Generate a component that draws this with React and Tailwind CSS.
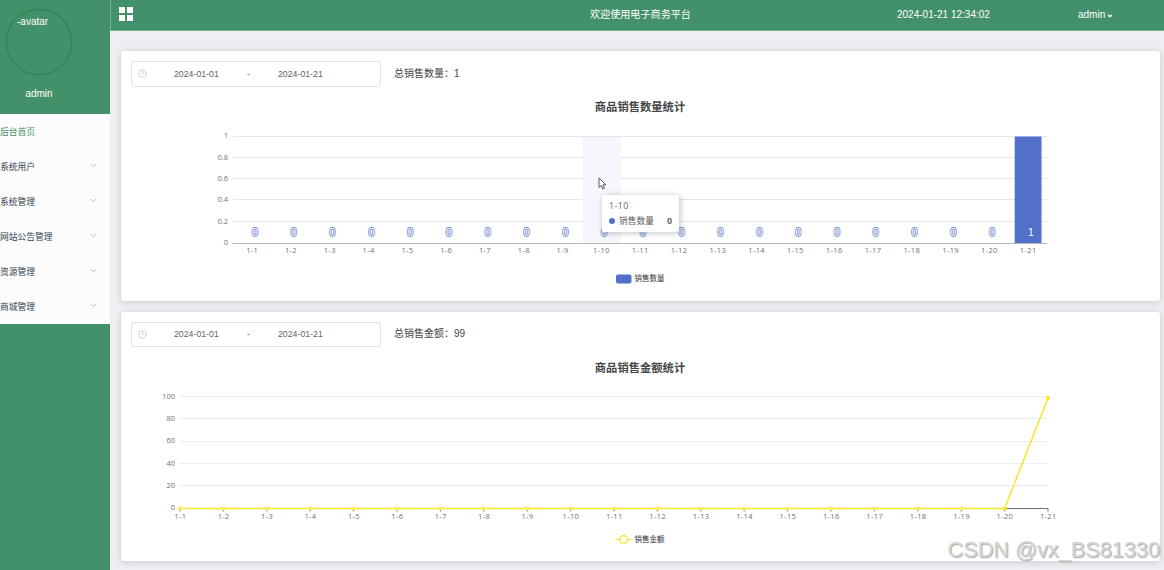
import { ChevronDown, Clock3 } from 'lucide-react';

const menuItems = [
  { label: '后台首页', active: true },
  { label: '系统用户' },
  { label: '系统管理' },
  { label: '网站公告管理' },
  { label: '资源管理' },
  { label: '商城管理' },
];

const days = Array.from({ length: 21 }, (_, i) => `1-${i + 1}`);
const counts = days.map((_, i) => (i === 20 ? 1 : 0));
const amounts = days.map((_, i) => (i === 20 ? 99 : 0));

const axisText = "font-['Open_Sans','Noto_Sans_CJK_SC',sans-serif] text-[7.5px] fill-[#6e7079]";
const legendText = "font-['Noto_Sans_CJK_SC',sans-serif] text-[7.5px] fill-[#333]";
const titleText = "font-['Noto_Sans_CJK_SC',sans-serif] text-[11.3px] font-bold fill-[#464646]";

function Sidebar() {
  return (
    <aside className="w-[110px] shrink-0 bg-[#43916a] text-white">
      <div className="h-[114px] pl-[6px] pt-[9px]">
        <div className="h-[66px] w-[66px] rounded-full border border-[#357d58] pl-[10px] pt-[5px] text-[10px] leading-[14px] shadow-[0_0_2px_#357d58]">
          -avatar
        </div>
        <p className="w-[66px] pt-[12px] text-center text-[10px] leading-[14px]">admin</p>
      </div>
      <ul className="bg-[#fcfcfc]">
        {menuItems.map((item) => (
          <li
            key={item.label}
            className={`flex h-[35px] items-center justify-between pr-[12px] text-[8.75px] leading-none ${
              item.active ? 'text-[#43916a]' : 'text-[#303f50]'
            }`}
          >
            <span className="pt-[2px]">{item.label}</span>
            {!item.active && <ChevronDown className="mb-[2px] h-[9px] w-[9px] text-[#a0a4ab]" strokeWidth={2} />}
          </li>
        ))}
      </ul>
    </aside>
  );
}

function Header() {
  return (
    <header className="flex h-[31px] items-center border-b border-l border-[#79b295] bg-[#43916a] text-[10px] leading-none text-white">
      <div className="ml-[8px] mb-[3px] grid grid-cols-2 gap-[2px]">
        <i className="h-[6px] w-[6px] bg-white" />
        <i className="h-[6px] w-[6px] bg-white" />
        <i className="h-[6px] w-[6px] bg-white" />
        <i className="h-[6px] w-[6px] bg-white" />
      </div>
      <span className="ml-[457px] w-[101px] whitespace-nowrap text-[10.1px]">欢迎使用电子商务平台</span>
      <span className="ml-[206px] mb-[1px] w-[94px] whitespace-nowrap">2024-01-21 12:34:02</span>
      <span className="ml-[87px] mb-[1px] flex items-center gap-[2px]">
        admin
        <ChevronDown className="mt-[2px] h-[6px] w-[6px]" strokeWidth={6} />
      </span>
    </header>
  );
}

function DateRange() {
  return (
    <div className="flex h-[25.5px] w-[250px] items-center rounded-[3px] border border-[#dfe2e8] text-[8.75px] leading-none text-[#606266]">
      <Clock3 className="ml-[6px] h-[9px] w-[9px] text-[#c0c4cc]" strokeWidth={2} />
      <span className="ml-[27px] w-[45px] whitespace-nowrap pt-[1px]">2024-01-01</span>
      <span className="w-[59px] pt-[1px] text-center">-</span>
      <span className="whitespace-nowrap pt-[1px]">2024-01-21</span>
    </div>
  );
}

function Card({ label, total, children }) {
  return (
    <section className="relative h-[249.5px] rounded-[3px] bg-white p-[10px] shadow-[0_1px_7px_rgba(0,0,0,0.16)]">
      <div className="flex items-center gap-[13px]">
        <DateRange />
        <p className="text-[10px] leading-none text-[#444]">
          {label}：{total}
        </p>
      </div>
      {children}
    </section>
  );
}

function CountChart() {
  const left = 101.5;
  const step = 38.8;
  const bottom = 152;
  return (
    <svg className="mt-[4.5px] block h-[200px] w-[1019px]" viewBox="0 0 1019 200">
      <text x="509" y="20" textAnchor="middle" className={titleText}>商品销售数量统计</text>
      {['0.2', '0.4', '0.6', '0.8', '1'].map((tick, i) => (
        <g key={tick}>
          <path d={`M${left} ${Math.round(bottom - (i + 1) * 21.3) - 0.5}H916.5`} stroke="#e4e7f0" />
          <text x="97" y={bottom - (i + 1) * 21.3 + 1.8} textAnchor="end" className={axisText}>{tick}</text>
        </g>
      ))}
      <text x="97" y={bottom + 1.5} textAnchor="end" className={axisText}>0</text>
      <rect x={left + 9 * step + 0.5} y="46" width="38.8" height="106" fill="#f5f7fc" />
      {counts.map((count, i) => {
        const center = left + step * (i + 0.5);
        return (
          <g key={days[i]}>
            {count > 0 && (
              <rect x={center - 13.2} y={bottom - count * 106.5} width="26.8" height={count * 106.5} fill="#5070ca" />
            )}
            <text
              x={center + 3}
              y="145.3"
              textAnchor="middle"
              className="font-['Liberation_Sans',sans-serif] text-[10.5px]"
              fill="#fff"
              stroke="#7b91d4"
              strokeWidth={count > 0 ? 0 : 1.8}
              paintOrder="stroke"
            >
              {count}
            </text>
            <text x={center + 0.3} y="162" textAnchor="middle" letterSpacing="0.35" className={axisText}>{days[i]}</text>
          </g>
        );
      })}
      <path d={`M${left} ${bottom + 0.5}H916.5`} stroke="#b4b6bb" />
      <rect x="485" y="183.5" width="15.5" height="9" rx="2" fill="#5070ca" />
      <text x="503.5" y="190" className={legendText}>销售数量</text>
    </svg>
  );
}

function AmountChart() {
  const left = 49;
  const step = 43.4;
  const bottom = 156.5;
  const y = (value) => bottom - value * 1.115;
  const points = amounts.map((value, i) => [left + i * step, y(value)]);
  return (
    <svg className="mt-[5px] block h-[200px] w-[1019px]" viewBox="0 0 1019 200">
      <text x="509" y="19.5" textAnchor="middle" className={titleText}>商品销售金额统计</text>
      {[0, 20, 40, 60, 80, 100].map((tick) => (
        <g key={tick}>
          {tick > 0 && <path d={`M${left} ${Math.round(y(tick)) - 0.5}H917`} stroke="#ebedf4" />}
          <text x="44" y={y(tick) + 1.8} textAnchor="end" className={axisText}>{tick}</text>
        </g>
      ))}
      <path d={`M${left} ${bottom}H917`} stroke="#6e7079" />
      {days.map((day, i) => (
        <g key={day}>
          <path d={`M${left + i * step} ${bottom}v3`} stroke="#6e7079" />
          <text x={left + i * step + 0.3} y="167" textAnchor="middle" letterSpacing="0.35" className={axisText}>{day}</text>
        </g>
      ))}
      <polyline points={points.map((p) => p.join(',')).join(' ')} fill="none" stroke="#fbe42c" strokeWidth="1.5" />
      {points.map(([cx, cy], i) => (
        <circle key={days[i]} cx={cx} cy={cy} r="1.5" fill={i > 18 ? '#fbe42c' : '#fffbd0'} stroke="#fbe42c" strokeWidth="1.2" />
      ))}
      <path d="M485 187.5h15.5" stroke="#fbe42c" strokeWidth="1.3" />
      <circle cx="492.7" cy="187.5" r="3.8" fill="#fff" stroke="#fbe42c" strokeWidth="1.3" />
      <text x="503.5" y="189.5" className={legendText}>销售金额</text>
    </svg>
  );
}

function Tooltip() {
  return (
    <div className="absolute left-[481px] top-[144px] h-[37px] w-[77px] rounded-[2px] bg-white px-[7px] pt-[6px] font-['Open_Sans','Noto_Sans_CJK_SC',sans-serif] text-[8.75px] leading-[11px] text-[#666] shadow-[1px_1px_6px_rgba(0,0,0,0.25)]">
      <p className="tracking-[0.5px]">1-10</p>
      <p className="mt-[4px] flex items-center">
        <i className="mb-[1px] mr-[4px] h-[6px] w-[6px] rounded-full bg-[#5070ca]" />
        <span>销售数量</span>
        <b className="ml-auto font-bold">0</b>
      </p>
    </div>
  );
}

export default function App() {
  return (
    <div className="relative flex h-[570px] w-[1164px] overflow-hidden bg-[#eeeef3] font-['Liberation_Sans','Noto_Sans_CJK_SC',sans-serif]">
      <Sidebar />
      <div className="min-w-0 flex-1">
        <Header />
        <main className="flex flex-col gap-[11px] pl-[11px] pr-[4px] pt-[20px]">
          <Card label="总销售数量" total={1}>
            <CountChart />
            <Tooltip />
            <svg className="absolute left-[477px] top-[126px] h-[13px] w-[9px]" viewBox="0 0 9 13">
              <path d="M1 1v9.5l2.2-2 1.6 3.5 1.6-.8-1.5-3.3h3z" fill="#fff" stroke="#333" strokeWidth="0.8" />
            </svg>
          </Card>
          <Card label="总销售金额" total={99}>
            <AmountChart />
          </Card>
        </main>
      </div>
      <span className="absolute bottom-[7px] right-[4px] whitespace-nowrap text-[21.7px] leading-[26px] text-[#d4d4d4] [text-shadow:1px_1px_1px_#aaa]">
        CSDN @vx_BS81330
      </span>
    </div>
  );
}
